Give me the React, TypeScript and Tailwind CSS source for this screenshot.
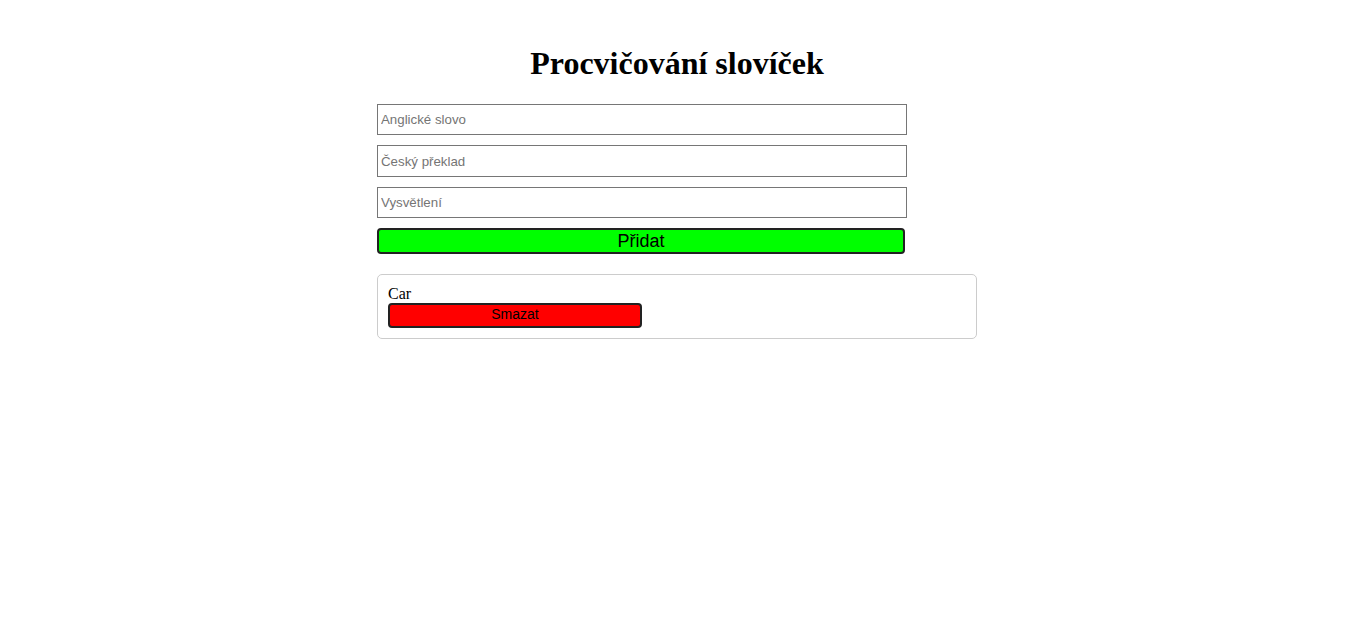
import React, { useState } from 'react';

type Word = { en: string; cs: string; note: string };

const App: React.FC = () => {
  const [words, setWords] = useState<Word[]>([{ en: 'Car', cs: '', note: '' }]);
  const [en, setEn] = useState('');
  const [cs, setCs] = useState('');
  const [note, setNote] = useState('');

  const addWord = () => {
    if (!en.trim()) return;
    setWords([...words, { en, cs, note }]);
    setEn('');
    setCs('');
    setNote('');
  };

  return (
    <div className="min-h-screen bg-white font-['Liberation_Serif',serif] text-black">
      <div className="ml-[377px] w-[600px] pt-[45px]">
        <h1 className="text-center text-[32px] font-bold leading-[37px]">Procvičování slovíček</h1>

        {/* form */}
        <div className="mt-[22px] flex flex-col gap-[10px]">
          <input
            value={en}
            onChange={(e) => setEn(e.target.value)}
            placeholder="Anglické slovo"
            className="h-[31px] w-[530px] border border-[#767676] px-[3px] font-['Liberation_Sans',sans-serif] text-[13.3px] placeholder:text-[#757575] outline-none"
          />
          <input
            value={cs}
            onChange={(e) => setCs(e.target.value)}
            placeholder="Český překlad"
            className="h-[32px] w-[530px] border border-[#767676] px-[3px] font-['Liberation_Sans',sans-serif] text-[13.3px] placeholder:text-[#757575] outline-none"
          />
          <input
            value={note}
            onChange={(e) => setNote(e.target.value)}
            placeholder="Vysvětlení"
            className="h-[31px] w-[530px] border border-[#767676] px-[3px] font-['Liberation_Sans',sans-serif] text-[13.3px] placeholder:text-[#757575] outline-none"
          />
          <button
            onClick={addWord}
            className="h-[26px] w-[528px] rounded-[4px] border-2 border-[#222] bg-[#00ff00] font-['Liberation_Sans',sans-serif] text-[18px] leading-none"
          >
            Přidat
          </button>
        </div>

        {/* word list */}
        <div className="mt-[20px] flex flex-col gap-[10px]">
          {words.map((w, i) => (
            <div key={i} className="h-[65px] rounded-[5px] border border-[#cccccc] px-[10px] pt-[10px]">
              <div className="text-[16px] leading-[18px]">{w.en}</div>
              <button
                onClick={() => setWords(words.filter((_, j) => j !== i))}
                className="block h-[25px] w-[254px] rounded-[4px] border-2 border-[#222] bg-[#ff0000] pb-[3px] font-['Liberation_Sans',sans-serif] text-[14px] leading-none"
              >
                Smazat
              </button>
            </div>
          ))}
        </div>
      </div>
    </div>
  );
};

export default App;
